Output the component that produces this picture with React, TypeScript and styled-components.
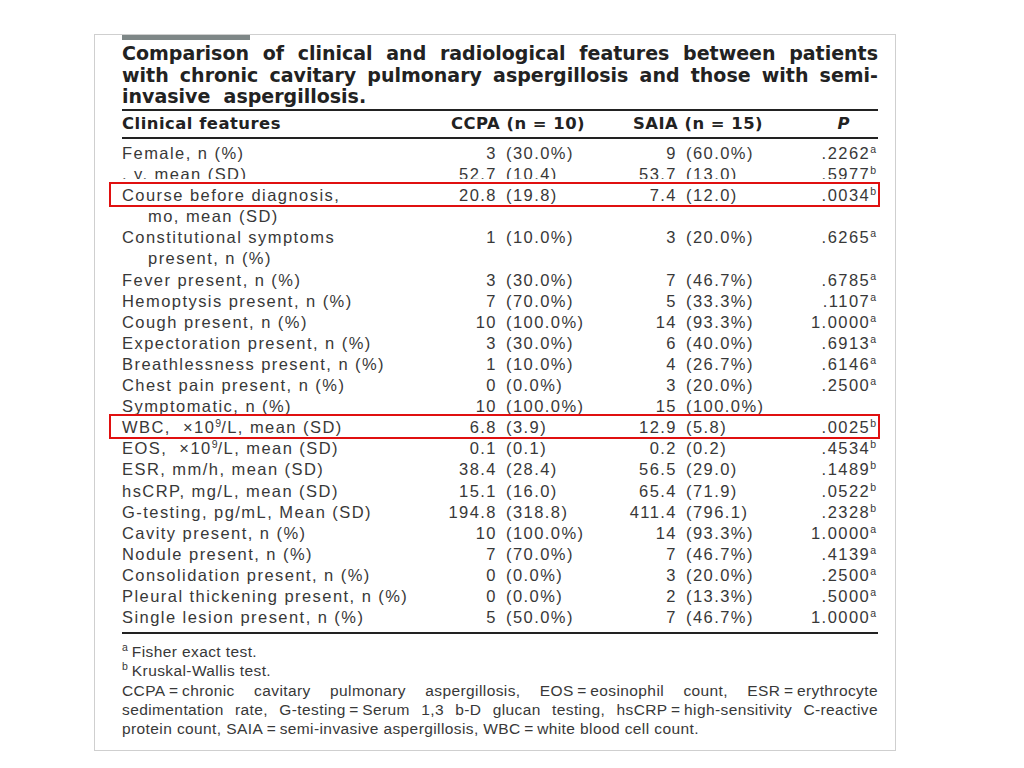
import React from "react";
import styled, { createGlobalStyle } from "styled-components";

const GlobalStyle = createGlobalStyle`
  html, body {
    margin: 0;
    padding: 0;
    background: #ffffff;
  }
  body {
    font-family: "Liberation Sans", Arial, sans-serif;
    color: #333333;
  }
`;

type Row = {
  label: React.ReactNode;
  indent?: boolean;
  ccpa?: [string, string];
  saia?: [string, string];
  p?: [string, string];
  boxed?: boolean;
  clipped?: boolean;
};

const Ten9 = () => (
  <>
    {"\u00d710"}
    <Sup>9</Sup>
    {"/L"}
  </>
);

const rows: Row[] = [
  { label: "Female, n (%)", ccpa: ["3", "(30.0%)"], saia: ["9", "(60.0%)"], p: [".2262", "a"] },
  { label: ", y, mean (SD)", ccpa: ["52.7", "(10.4)"], saia: ["53.7", "(13.0)"], p: [".5977", "b"], clipped: true },
  { label: "Course before diagnosis,", ccpa: ["20.8", "(19.8)"], saia: ["7.4", "(12.0)"], p: [".0034", "b"], boxed: true },
  { label: "mo, mean (SD)", indent: true },
  { label: "Constitutional symptoms", ccpa: ["1", "(10.0%)"], saia: ["3", "(20.0%)"], p: [".6265", "a"] },
  { label: "present, n (%)", indent: true },
  { label: "Fever present, n (%)", ccpa: ["3", "(30.0%)"], saia: ["7", "(46.7%)"], p: [".6785", "a"] },
  { label: "Hemoptysis present, n (%)", ccpa: ["7", "(70.0%)"], saia: ["5", "(33.3%)"], p: [".1107", "a"] },
  { label: "Cough present, n (%)", ccpa: ["10", "(100.0%)"], saia: ["14", "(93.3%)"], p: ["1.0000", "a"] },
  { label: "Expectoration present, n (%)", ccpa: ["3", "(30.0%)"], saia: ["6", "(40.0%)"], p: [".6913", "a"] },
  { label: "Breathlessness present, n (%)", ccpa: ["1", "(10.0%)"], saia: ["4", "(26.7%)"], p: [".6146", "a"] },
  { label: "Chest pain present, n (%)", ccpa: ["0", "(0.0%)"], saia: ["3", "(20.0%)"], p: [".2500", "a"] },
  { label: "Symptomatic, n (%)", ccpa: ["10", "(100.0%)"], saia: ["15", "(100.0%)"] },
  { label: <>WBC,  <Ten9 />, mean (SD)</>, ccpa: ["6.8", "(3.9)"], saia: ["12.9", "(5.8)"], p: [".0025", "b"], boxed: true },
  { label: <>EOS,  <Ten9 />, mean (SD)</>, ccpa: ["0.1", "(0.1)"], saia: ["0.2", "(0.2)"], p: [".4534", "b"] },
  { label: "ESR, mm/h, mean (SD)", ccpa: ["38.4", "(28.4)"], saia: ["56.5", "(29.0)"], p: [".1489", "b"] },
  { label: "hsCRP, mg/L, mean (SD)", ccpa: ["15.1", "(16.0)"], saia: ["65.4", "(71.9)"], p: [".0522", "b"] },
  { label: "G-testing, pg/mL, Mean (SD)", ccpa: ["194.8", "(318.8)"], saia: ["411.4", "(796.1)"], p: [".2328", "b"] },
  { label: "Cavity present, n (%)", ccpa: ["10", "(100.0%)"], saia: ["14", "(93.3%)"], p: ["1.0000", "a"] },
  { label: "Nodule present, n (%)", ccpa: ["7", "(70.0%)"], saia: ["7", "(46.7%)"], p: [".4139", "a"] },
  { label: "Consolidation present, n (%)", ccpa: ["0", "(0.0%)"], saia: ["3", "(20.0%)"], p: [".2500", "a"] },
  { label: "Pleural thickening present, n (%)", ccpa: ["0", "(0.0%)"], saia: ["2", "(13.3%)"], p: [".5000", "a"] },
  { label: "Single lesion present, n (%)", ccpa: ["5", "(50.0%)"], saia: ["7", "(46.7%)"], p: ["1.0000", "a"] },
];

export default function App() {
  return (
    <>
      <GlobalStyle />
      <Panel>
        <TopBar />
        <Title>
          <TitleLine $justify>Comparison of clinical and radiological features between patients</TitleLine>
          <TitleLine $justify>with chronic cavitary pulmonary aspergillosis and those with semi-</TitleLine>
          <TitleLine>invasive  aspergillosis.</TitleLine>
        </Title>
        <HeadRow>
          <HeadLabel>Clinical features</HeadLabel>
          <HeadGroup $pad={14}>CCPA (n = 10)</HeadGroup>
          <HeadGroup $pad={16}>SAIA (n = 15)</HeadGroup>
          <HeadP>P</HeadP>
        </HeadRow>
        <Body>
          {rows.map((r, i) => (
            <BodyRow key={i} $boxed={r.boxed}>
              <RowInner $clipped={r.clipped}>
                <Label $indent={r.indent}>{r.label}</Label>
                <Num>{r.ccpa?.[0]}</Num>
                <Sd>{r.ccpa?.[1]}</Sd>
                <Num>{r.saia?.[0]}</Num>
                <Sd>{r.saia?.[1]}</Sd>
                <PVal>
                  {r.p && (
                    <>
                      {r.p[0]}
                      <Sup>{r.p[1]}</Sup>
                    </>
                  )}
                </PVal>
              </RowInner>
            </BodyRow>
          ))}
        </Body>
        <Notes>
          <NoteLine>
            <NoteMark>a</NoteMark>Fisher exact test.
          </NoteLine>
          <NoteLine>
            <NoteMark>b</NoteMark>Kruskal-Wallis test.
          </NoteLine>
          <NoteLine $justify>
            CCPA{"\u2009=\u2009"}chronic cavitary pulmonary aspergillosis, EOS{"\u2009=\u2009"}eosinophil count, ESR{"\u2009=\u2009"}erythrocyte
          </NoteLine>
          <NoteLine $justify>
            sedimentation rate, G-testing{"\u2009=\u2009"}Serum 1,3 b-D glucan testing, hsCRP{"\u2009=\u2009"}high-sensitivity C-reactive
          </NoteLine>
          <NoteLine>
            protein count, SAIA{"\u2009=\u2009"}semi-invasive aspergillosis, WBC{"\u2009=\u2009"}white blood cell count.
          </NoteLine>
        </Notes>
      </Panel>
    </>
  );
}

const COLS = "315px 60px 120px 60px 103px 98px";

const Panel = styled.div`
  box-sizing: border-box;
  margin: 34px 0 0 94px;
  width: 802px;
  height: 717px;
  border: 1px solid #cfcfcf;
  padding: 0 17px 0 27px;
  background: #ffffff;
`;

const TopBar = styled.div`
  width: 128px;
  height: 5px;
  background: #7e8787;
`;

const Title = styled.div`
  margin-top: 3px;
  font-family: "DejaVu Sans", "Liberation Sans", sans-serif;
  font-weight: bold;
  font-size: 19px;
  line-height: 21.5px;
  color: #222222;
  padding-bottom: 1px;
  border-bottom: 2px solid #222222;
`;

const TitleLine = styled.div<{ $justify?: boolean }>`
  white-space: ${(p) => (p.$justify ? "nowrap" : "pre")};
  text-align: ${(p) => (p.$justify ? "justify" : "left")};
  text-align-last: ${(p) => (p.$justify ? "justify" : "left")};
`;

const HeadRow = styled.div`
  display: grid;
  grid-template-columns: 315px 180px 163px 98px;
  height: 26px;
  align-items: center;
  font-family: "DejaVu Sans", "Liberation Sans", sans-serif;
  font-weight: bold;
  font-size: 16.4px;
  letter-spacing: 0.5px;
  color: #222222;
  border-bottom: 2px solid #222222;
`;

const HeadLabel = styled.div``;

const HeadGroup = styled.div<{ $pad: number }>`
  padding-left: ${(p) => p.$pad}px;
  white-space: pre;
`;

const HeadP = styled.div`
  text-align: right;
  padding-right: 28px;
  font-style: italic;
`;

const Body = styled.div`
  padding: 4.5px 0 4px;
  border-bottom: 2px solid #222222;
  font-size: 16.5px;
  letter-spacing: 1.45px;
  color: #383838;
`;

const BodyRow = styled.div<{ $boxed?: boolean }>`
  position: relative;
  height: 21.1px;
  ${(p) =>
    p.$boxed &&
    `
    &::after {
      content: "";
      position: absolute;
      left: -13px;
      right: -2px;
      top: -3px;
      bottom: -1px;
      border: 2px solid #e01010;
    }
  `}
`;

const RowInner = styled.div<{ $clipped?: boolean }>`
  display: grid;
  grid-template-columns: ${COLS};
  align-items: center;
  height: 21.1px;
  line-height: 21.1px;
  white-space: pre;
  ${(p) =>
    p.$clipped &&
    `
    height: 15px;
    overflow: hidden;
    align-items: start;
  `}
`;

const Label = styled.div<{ $indent?: boolean }>`
  padding-left: ${(p) => (p.$indent ? 26 : 0)}px;
`;

const Num = styled.div`
  text-align: right;
`;

const Sd = styled.div`
  padding-left: 9px;
`;

const PVal = styled.div`
  text-align: right;
  padding-right: 2px;
`;

const Sup = styled.sup`
  font-size: 10.5px;
  line-height: 0;
  vertical-align: 6px;
  letter-spacing: 0;
`;

const NoteMark = styled(Sup)`
  margin-right: 4px;
`;

const Notes = styled.div`
  padding-top: 8px;
  font-size: 15.5px;
  line-height: 19.3px;
  letter-spacing: 0.4px;
  color: #383838;
`;

const NoteLine = styled.div<{ $justify?: boolean }>`
  text-align: ${(p) => (p.$justify ? "justify" : "left")};
  text-align-last: ${(p) => (p.$justify ? "justify" : "left")};
`;
